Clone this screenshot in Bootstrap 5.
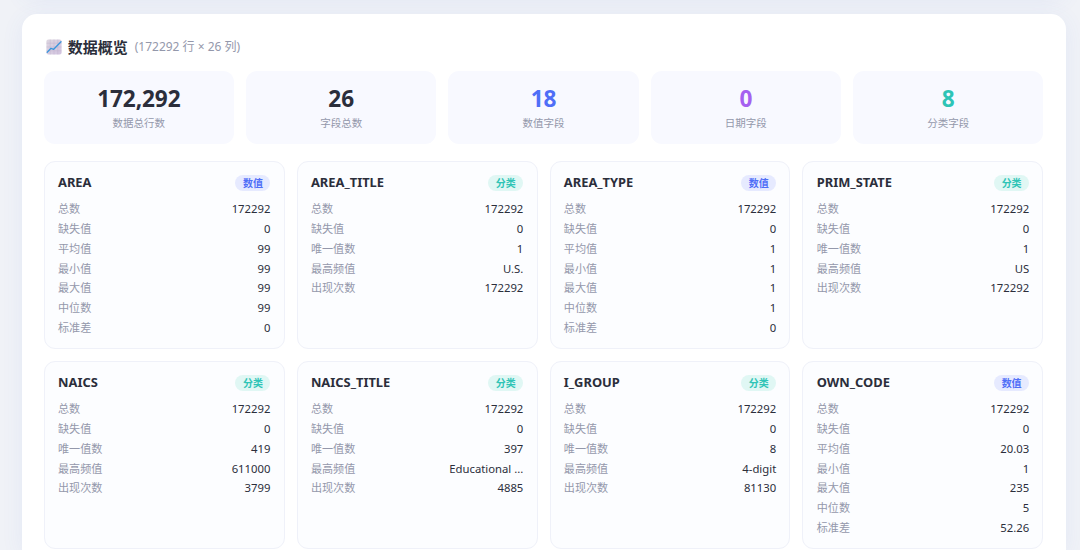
<!DOCTYPE html>
<html lang="zh-CN">
<head>
<meta charset="utf-8">
<meta name="viewport" content="width=device-width, initial-scale=1">
<title>数据概览</title>
<link href="https://cdn.jsdelivr.net/npm/bootstrap@5.3.0/dist/css/bootstrap.min.css" rel="stylesheet">
<style>
body{height:550px;background:#f0f2f7;color:#2b2e3b;font-family:"Noto Sans","Noto Sans CJK SC",sans-serif;padding:0 14.3px 0 21.5px}
.panel{background:#fff;border-radius:15px;box-shadow:0 4px 22px rgba(80,110,220,.08)}
.previous{height:60px;margin-top:-64px;margin-bottom:18.4px}
.overview{padding:22.2px 22.4px 0 22.2px;height:535.6px;border-radius:15px 15px 0 0}
.heading{height:20px;margin-bottom:14.9px}
.heading svg{width:16px;height:16px;margin:0 6px 0 2px}
.heading h2{font-size:15px;line-height:20px}
.heading span{font-size:12px;color:#9498ab;margin-left:7px;line-height:20px}
.stats{display:grid;grid-template-columns:repeat(5,1fr);gap:12px;margin-bottom:17.5px}
.stat{background:#f8f9ff;border-radius:11px;height:72.5px;padding-top:13px}
.stat-value{font-family:"Open Sans","Noto Sans",sans-serif;font-size:22.6px;line-height:30px;font-weight:700;letter-spacing:-.1px}
.stat-name{font-size:10.5px;line-height:18px;color:#9498ab}
.fields{display:grid;grid-template-columns:repeat(4,1fr);gap:12px}
.field{background:#fcfdff;border:1px solid #eff1f9;border-radius:11px;height:188px;padding:12px 13.2px 0 13.3px}
.field h3{font-size:12.9px;line-height:17px;font-weight:700}
.kind{font-size:10px;line-height:16px;width:35px;border-radius:8px;text-align:center;font-weight:700}
.kind-num{background:#e6eaff;color:#4f6ef7}
.kind-cat{background:#e0f7f4;color:#2ec4b6}
.pair{font-size:11.1px;line-height:19.72px;height:19.72px}
.pair dt{font-weight:400;color:#9498ab}
.pair dd{font-weight:400;font-size:11.3px}
.blue{color:#4f6ef7}.purple{color:#a560f0}.teal{color:#2ec4b6}
</style>
</head>
<body class="overflow-hidden">
<div class="panel previous"></div>
<main class="panel overview">
  <div class="heading d-flex align-items-center">
    <svg viewBox="0 0 16 16" aria-hidden="true">
      <defs><linearGradient id="paper" x2="1" y2="1"><stop stop-color="#ddd6e0"/><stop offset="1" stop-color="#d2c4e0"/></linearGradient></defs>
      <rect x=".4" y=".4" width="15.2" height="15.2" rx="2" fill="url(#paper)"/>
      <path d="M4.2 .5v15M8 .5v15M11.8 .5v15M.5 4.2h15M.5 8h15M.5 11.8h15" stroke="#bcaecb" stroke-width=".4"/>
      <path d="M1.2 13.2L5 9.3L7.7 10.3L15 2.8" fill="none" stroke="#3a96dc" stroke-width="1.3" stroke-linecap="round" stroke-linejoin="round"/>
    </svg>
    <h2 class="fw-bold mb-0">数据概览</h2><span>(172292 行 × 26 列)</span>
  </div>
  <div class="stats text-center">
    <div class="stat"><div class="stat-value">172,292</div><div class="stat-name">数据总行数</div></div>
    <div class="stat"><div class="stat-value">26</div><div class="stat-name">字段总数</div></div>
    <div class="stat"><div class="stat-value blue">18</div><div class="stat-name">数值字段</div></div>
    <div class="stat"><div class="stat-value purple">0</div><div class="stat-name">日期字段</div></div>
    <div class="stat"><div class="stat-value teal">8</div><div class="stat-name">分类字段</div></div>
  </div>
  <div class="fields" id="fields"></div>
</main>
<script src="https://cdn.jsdelivr.net/npm/bootstrap@5.3.0/dist/js/bootstrap.bundle.min.js"></script>
<script>
const labels = {
  num: ['总数', '缺失值', '平均值', '最小值', '最大值', '中位数', '标准差'],
  cat: ['总数', '缺失值', '唯一值数', '最高频值', '出现次数']
};
const kinds = { num: '数值', cat: '分类' };
const fields = [
  ['AREA', 'num', ['172292', '0', '99', '99', '99', '99', '0']],
  ['AREA_TITLE', 'cat', ['172292', '0', '1', 'U.S.', '172292']],
  ['AREA_TYPE', 'num', ['172292', '0', '1', '1', '1', '1', '0']],
  ['PRIM_STATE', 'cat', ['172292', '0', '1', 'US', '172292']],
  ['NAICS', 'cat', ['172292', '0', '419', '611000', '3799']],
  ['NAICS_TITLE', 'cat', ['172292', '0', '397', 'Educational ...', '4885']],
  ['I_GROUP', 'cat', ['172292', '0', '8', '4-digit', '81130']],
  ['OWN_CODE', 'num', ['172292', '0', '20.03', '1', '235', '5', '52.26']]
];
document.getElementById('fields').innerHTML = fields.map(([name, kind, values]) => `
  <section class="field">
    <div class="d-flex justify-content-between align-items-center mb-2">
      <h3 class="mb-0">${name}</h3><span class="kind kind-${kind}">${kinds[kind]}</span>
    </div>
    <dl class="mb-0">${values.map((v, i) => `<div class="pair d-flex justify-content-between"><dt>${labels[kind][i]}</dt><dd class="mb-0">${v}</dd></div>`).join('')}</dl>
  </section>`).join('');
</script>
</body>
</html>
